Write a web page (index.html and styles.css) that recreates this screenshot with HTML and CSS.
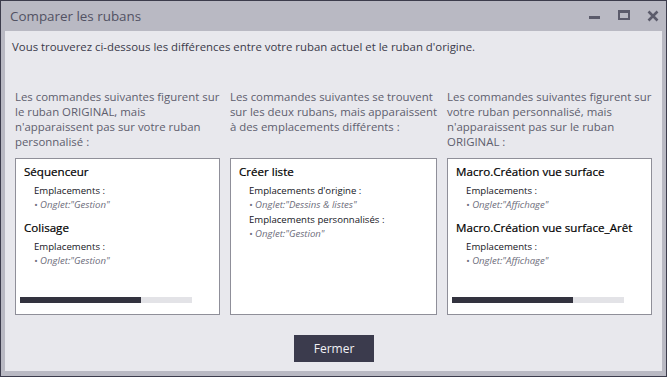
FILE: index.html
```html
<!DOCTYPE html>
<html lang="fr">
<head>
<meta charset="utf-8">
<title>Comparer les rubans</title>
<link rel="stylesheet" href="styles.css">
</head>
<body>
<div class="window">
  <div class="titlebar">
    <span class="title">Comparer les rubans</span>
    <div class="controls">
      <svg class="ctl" width="12" height="12" viewBox="0 0 12 12"><rect x="0" y="6" width="11" height="3" fill="#5b5b6b"/></svg>
      <svg class="ctl" width="12" height="12" viewBox="0 0 12 12"><rect x="1" y="1.5" width="10" height="7.5" fill="none" stroke="#5b5b6b" stroke-width="2"/><rect x="0" y="0" width="12" height="3" fill="#5b5b6b"/></svg>
      <svg class="ctl" width="12" height="12" viewBox="0 0 12 12"><path d="M1.5 1.5 L10.5 10.5 M10.5 1.5 L1.5 10.5" stroke="#5b5b6b" stroke-width="2.6"/></svg>
    </div>
  </div>
  <div class="content">
    <p class="intro">Vous trouverez ci-dessous les différences entre votre ruban actuel et le ruban d'origine.</p>
    <div class="columns">
      <div class="col">
        <p class="heading">Les commandes suivantes figurent sur<br>le ruban ORIGINAL, mais<br>n'apparaissent pas sur votre ruban<br>personnalisé :</p>
        <div class="box">
          <div class="list">
            <div class="cmd">Séquenceur</div>
            <div class="sub">Emplacements :</div>
            <div class="item">• Onglet:"Gestion"</div>
            <div class="cmd next">Colisage</div>
            <div class="sub">Emplacements :</div>
            <div class="item">• Onglet:"Gestion"</div>
          </div>
          <div class="hscroll"><div class="thumb"></div></div>
        </div>
      </div>
      <div class="col">
        <p class="heading">Les commandes suivantes se trouvent<br>sur les deux rubans, mais apparaissent<br>à des emplacements différents :</p>
        <div class="box">
          <div class="list">
            <div class="cmd">Créer liste</div>
            <div class="sub">Emplacements d'origine :</div>
            <div class="item">• Onglet:"Dessins &amp; listes"</div>
            <div class="sub tight">Emplacements personnalisés :</div>
            <div class="item">• Onglet:"Gestion"</div>
          </div>
        </div>
      </div>
      <div class="col">
        <p class="heading">Les commandes suivantes figurent sur<br>votre ruban personnalisé, mais<br>n'apparaissent pas sur le ruban<br>ORIGINAL :</p>
        <div class="box">
          <div class="list">
            <div class="cmd">Macro.Création vue surface</div>
            <div class="sub">Emplacements :</div>
            <div class="item">• Onglet:"Affichage"</div>
            <div class="cmd next">Macro.Création vue surface_Arêt</div>
            <div class="sub">Emplacements :</div>
            <div class="item">• Onglet:"Affichage"</div>
          </div>
          <div class="hscroll"><div class="thumb"></div></div>
        </div>
      </div>
    </div>
    <div class="actions">
      <button class="btn">Fermer</button>
    </div>
  </div>
</div>
</body>
</html>
```

FILE: styles.css
```css
* { box-sizing: border-box; }
html, body { margin: 0; padding: 0; }
body {
  width: 667px;
  height: 377px;
  overflow: hidden;
  font-family: "Open Sans", "Noto Sans", sans-serif;
}
.window {
  width: 667px;
  height: 377px;
  border: 1px solid #3c3c4c;
  background: #b9b9c3;
  padding: 0 4px 5px 4px;
  display: flex;
  flex-direction: column;
}
.titlebar {
  height: 30px;
  display: flex;
  align-items: center;
  justify-content: space-between;
  padding-left: 5px;
}
.title {
  font-size: 13.4px;
  color: #525263;
}
.controls {
  display: flex;
  gap: 17px;
  padding-right: 3px;
  align-items: center;
}
.ctl { display: block; }
.content {
  flex: 1;
  background: #e8e8ed;
  padding: 8px 10px 9px 10px;
  display: flex;
  flex-direction: column;
}
.intro {
  margin: 0 0 0 -3px;
  font-size: 11.4px;
  line-height: 16px;
  color: #3a3a4a;
}
.columns {
  margin-top: 34px;
  display: grid;
  grid-template-columns: 1fr 1fr 1fr;
  column-gap: 10px;
}
.col { display: flex; flex-direction: column; }
.heading {
  margin: 0 0 9px 0;
  height: 60px;
  font-size: 11.4px;
  line-height: 15px;
  color: #5e5e6e;
  white-space: nowrap;
}
.box {
  height: 157px;
  background: #ffffff;
  border: 1px solid #8f8f99;
  display: flex;
  flex-direction: column;
  padding: 4px 0 11px 0;
}
.list { flex: 1; padding-left: 8px; }
.cmd {
  font-size: 11.6px;
  line-height: 18px;
  color: #000;
  white-space: nowrap;
  -webkit-text-stroke: 0.2px #000;
}
.cmd.next { margin-top: 7px; }
.sub {
  margin-top: 3px;
  padding-left: 10px;
  font-size: 9.6px;
  line-height: 14px;
  color: #16161e;
}
.sub.tight { margin-top: 1px; }
.item {
  padding-left: 10px;
  font-size: 9.6px;
  line-height: 14px;
  font-style: italic;
  color: #6e6e7c;
}
.hscroll {
  margin: 0 4px 0 4px;
  width: 172px;
  height: 6px;
  background: #e3e3e7;
}
.thumb {
  width: 121px;
  height: 6px;
  background: #33333f;
}
.actions {
  margin-top: 20px;
  display: flex;
  justify-content: center;
}
.btn {
  width: 80px;
  height: 27px;
  border: none;
  background: #3b3b4d;
  color: #f2f2f6;
  font-family: "Open Sans", "Noto Sans", sans-serif;
  font-size: 12px;
  padding: 0;
  margin-left: 1px;
}
```
